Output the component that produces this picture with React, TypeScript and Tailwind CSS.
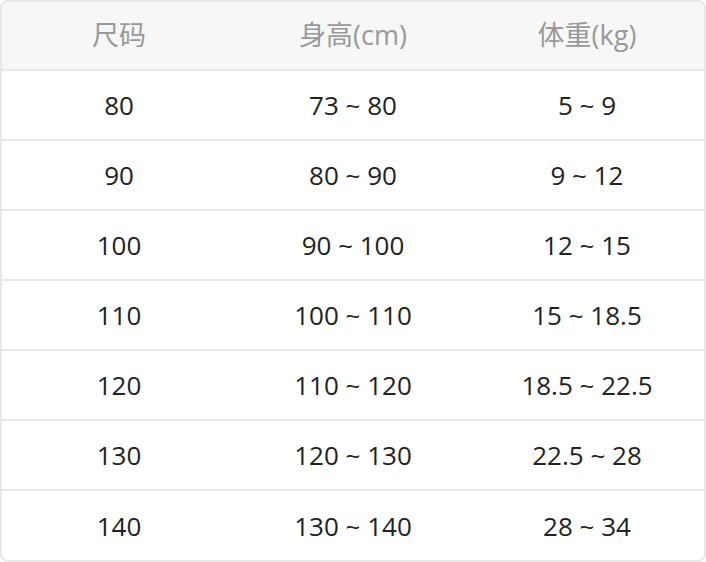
const headers = ['尺码', '身高(cm)', '体重(kg)'];

const rows = [
  ['80', '73 ~ 80', '5 ~ 9'],
  ['90', '80 ~ 90', '9 ~ 12'],
  ['100', '90 ~ 100', '12 ~ 15'],
  ['110', '100 ~ 110', '15 ~ 18.5'],
  ['120', '110 ~ 120', '18.5 ~ 22.5'],
  ['130', '120 ~ 130', '22.5 ~ 28'],
  ['140', '130 ~ 140', '28 ~ 34'],
];

export default function App() {
  return (
    <div
      className="w-[706px] h-[562px] bg-white"
      style={{ fontFamily: '"Open Sans", "Noto Sans CJK SC", sans-serif' }}
    >
      <div className="h-full border-2 border-[#e8e8e8] rounded-lg overflow-hidden">
        <div className="grid grid-cols-3 h-[69px] bg-[#f7f7f7] border-b-2 border-[#e8e8e8]">
          {headers.map((h) => (
            <div key={h} className="flex items-center justify-center text-[27px] text-[#999999]">
              {h}
            </div>
          ))}
        </div>
        {rows.map((row, i) => (
          <div
            key={row[0]}
            className={`grid grid-cols-3 h-[70px] ${i < rows.length - 1 ? 'border-b-2 border-[#e8e8e8]' : ''}`}
          >
            {row.map((cell, j) => (
              <div key={j} className="flex items-center justify-center text-[26px] text-[#222222]">
                {cell}
              </div>
            ))}
          </div>
        ))}
      </div>
    </div>
  );
}
